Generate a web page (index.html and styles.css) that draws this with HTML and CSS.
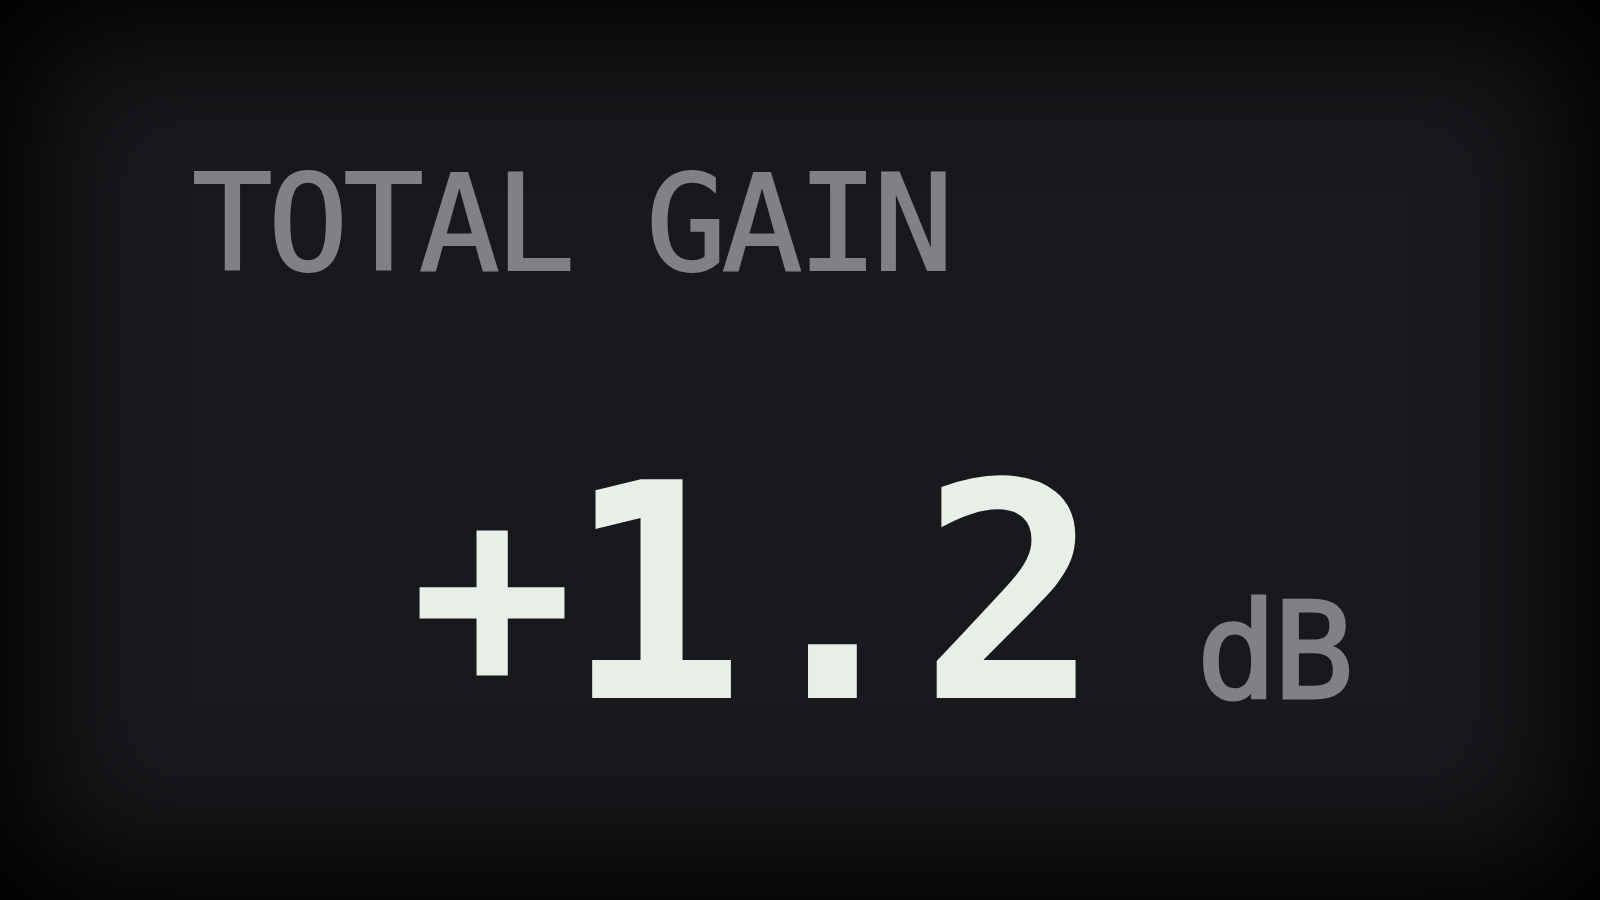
FILE: index.html
```html
<!DOCTYPE html>
<html>
<head>
  <title>Total Gain</title>
  <link rel="stylesheet" href="styles.css">
</head>
<body>

  <div class="panel">
    <div class="label">TOTAL GAIN</div>
    <div class="readout">
      <span class="value"><span class="sign">+</span>1.2</span>
      <span class="unit">dB</span>
    </div>
  </div>

</body>
</html>
```

FILE: styles.css
```css
html, body { margin: 0; height: 100%; background: #000; }
body { font-family: "DejaVu Sans Mono", "Liberation Mono", monospace; overflow: hidden; }
.panel { height: 100vh; box-sizing: border-box; padding: 157px 0 0 192px; background: #18191c; box-shadow: inset 0 0 130px 34px #000; }
.label { font-size: 134px; line-height: 1; letter-spacing: -5px; color: #808186; -webkit-text-stroke: 2px #808186; }
.readout { display: flex; align-items: baseline; margin: 154px 0 0 218px; }
.value { font-size: 300px; line-height: 1; font-weight: bold; letter-spacing: -3px; color: #e9eee8; }
.sign { display: inline-block; margin: 0 -15px 0 -8px; transform: scale(0.9); }
.unit { font-size: 134px; line-height: 1; letter-spacing: -4px; color: #808186; -webkit-text-stroke: 3px #808186; margin-left: 99px; }
```
